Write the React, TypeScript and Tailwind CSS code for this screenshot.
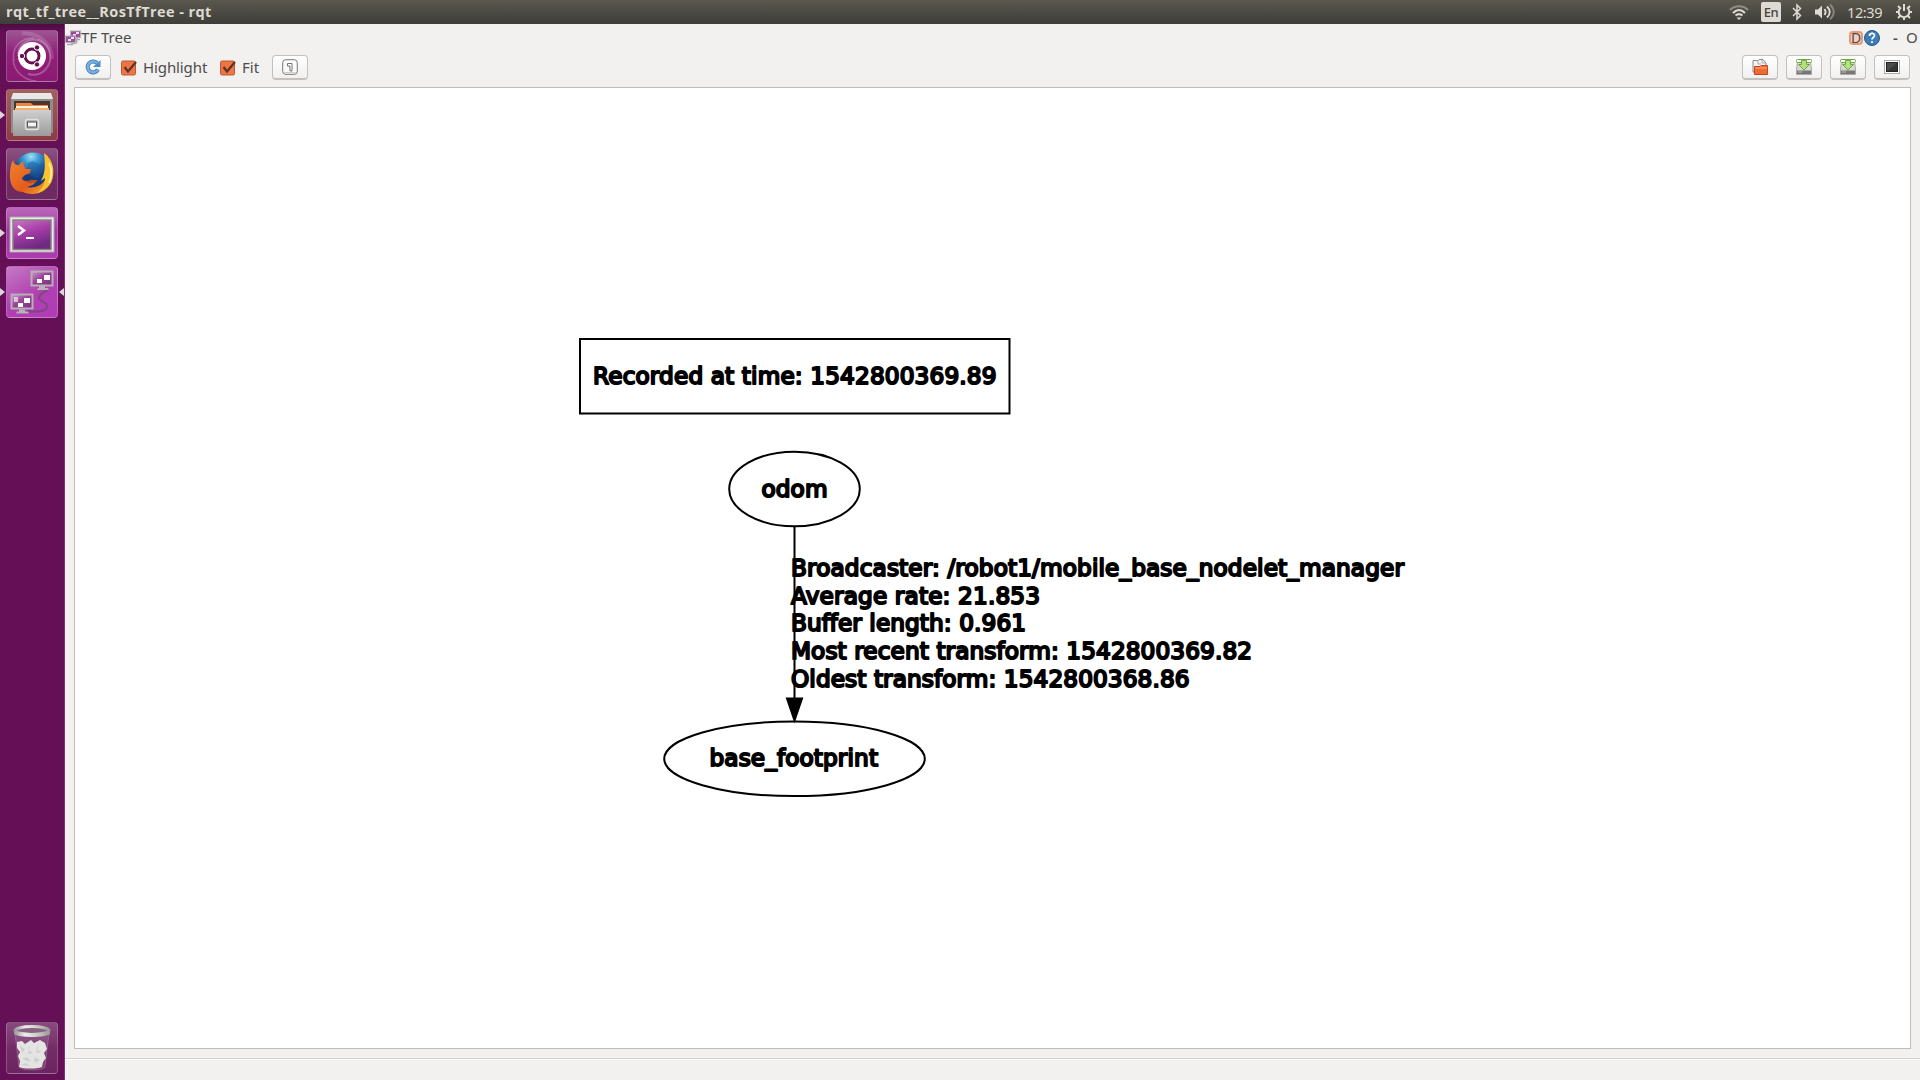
import type { ReactNode } from 'react';

const graphLines = [
  { x: 791, y: 576, w: 613, t: 'Broadcaster: /robot1/mobile_base_nodelet_manager' },
  { x: 791, y: 603.8, w: 249, t: 'Average rate: 21.853' },
  { x: 791, y: 631.4, w: 235, t: 'Buffer length: 0.961' },
  { x: 791, y: 659, w: 461, t: 'Most recent transform: 1542800369.82' },
  { x: 791, y: 686.5, w: 398.5, t: 'Oldest transform: 1542800368.86' },
  { x: 593, y: 384, w: 403.5, t: 'Recorded at time: 1542800369.89' },
  { x: 761.5, y: 496.6, w: 66, t: 'odom' },
  { x: 709.5, y: 766.3, w: 168.5, t: 'base_footprint' },
];

function Graph() {
  return (
    <svg className="block h-full w-full" viewBox="75 88 1835 960" fill="none" stroke="#000" strokeWidth="2">
      <rect x="580" y="339" width="429.5" height="74.5" />
      <ellipse cx="794.5" cy="489" rx="65.3" ry="37.3" />
      <ellipse cx="794.5" cy="758.8" rx="130.3" ry="37.3" />
      <path d="M794.5 526V700" />
      <path d="M787 698.5h15l-7.500 22z" fill="#000" />
      <g fill="#000" strokeWidth="2" strokeLinejoin="round" fontFamily="DejaVu Sans" fontSize="23.2">
        {graphLines.map((l) => (
          <text key={l.t} x={l.x} y={l.y} textLength={l.w}>{l.t}</text>
        ))}
      </g>
    </svg>
  );
}

function Arrow({ flip = false }: { flip?: boolean }) {
  return (
    <svg className={flip ? 'absolute right-px top-5 h-3 w-[5px]' : 'absolute left-0 top-5 h-3 w-[5px]'} viewBox="0 0 5 12">
      <path d={flip ? 'M5 2v8L0 6z' : 'M0 2v8l5-4z'} fill="#dcd5dc" />
    </svg>
  );
}

function Tile({ children, className, left, right }: { children: ReactNode; className: string; left?: boolean; right?: boolean }) {
  return (
    <div className="relative flex h-[52px] w-[65px] shrink-0 pl-1.5">
      <div className={'h-[52px] w-[52px] overflow-hidden rounded-[4px] border border-white/20 ' + className}>
        <svg className="-m-px block h-[52px] w-[52px]" viewBox="0 0 52 52">{children}</svg>
      </div>
      {left && <Arrow />}
      {right && <Arrow flip />}
    </div>
  );
}

function Launcher() {
  return (
    <aside className="flex w-[65px] shrink-0 flex-col gap-[7px] border-r border-[#7d3470] bg-[linear-gradient(#4d0b42_0,#650f56_8px,#650f56)] pb-1.5 pt-1.5">
      <Tile className="bg-[linear-gradient(#9d5593,#902079_45%,#8b1a73)]">
        <g fill="none" stroke="#fff">
          <path d="M12 26C12 6 40 3 44 24c2 12-8 24-22 20" strokeOpacity=".25" strokeWidth="2" />
          <path d="M7 29C8 42 18 50 30 51M8 31C5 17 15 8 28 8" strokeOpacity=".25" strokeWidth="1.500" />
          <path d="M16 3C31 3 46 12 46 29" strokeOpacity=".15" strokeWidth="4" />
        </g>
        <circle cx="26" cy="26" r="14" fill="#fff" />
        <circle cx="26" cy="26" r="7" fill="none" stroke="#64104f" strokeWidth="3" />
        <g stroke="#fff" strokeWidth="1" fill="#64104f">
          <circle cx="16" cy="26" r="2.700" /><circle cx="31" cy="17.500" r="2.700" /><circle cx="31" cy="34.500" r="2.700" />
        </g>
      </Tile>
      <Tile left className="bg-[linear-gradient(#a26060,#8d3a45)]">
        <defs>
          <linearGradient id="cab" x1="0" y1="0" x2="0" y2="1"><stop stopColor="#cfcfcf" /><stop offset="1" stopColor="#9b9b9b" /></linearGradient>
        </defs>
        <path d="M7 4h38l2 7v33H5V11z" fill="#8f8d8b" />
        <path d="M7 4h38l2 6H5z" fill="#e8e8e6" />
        <path d="M8 12h36v10H8z" fill="#4a3530" />
        <path d="M10 14h15l2 2h15v6H10z" fill="#e98743" />
        <path d="M10 17h32v2H10z" fill="#fff1df" /><path d="M9 19h34v3H9z" fill="#f5ad6e" />
        <path d="M7 21h38v26H7z" fill="url(#cab)" />
        <rect x="19.500" y="30.500" width="13" height="10" rx="2" fill="#aaa" stroke="#e0e0e0" strokeWidth="1.500" />
        <rect x="21.500" y="33" width="9" height="5" fill="#f5f5f5" stroke="#555" />
      </Tile>
      <Tile className="bg-[linear-gradient(#8a5280,#6e2b61_60%)]">
        <defs>
          <radialGradient id="globe" cx=".45" cy=".1"><stop stopColor="#9ee0f5" /><stop offset=".4" stopColor="#3e9bd3" /><stop offset="1" stopColor="#153b7b" /></radialGradient>
          <linearGradient id="fox" x1="0" y1="0" x2="1" y2=".8"><stop stopColor="#ed8430" /><stop offset=".6" stopColor="#e55b1d" /><stop offset="1" stopColor="#f6a82b" /></linearGradient>
        </defs>
        <circle cx="27" cy="24" r="19.500" fill="url(#globe)" />
        <path d="M22 15l5-2 6 3 5-1v9l-6 6-6-2-5-5z" fill="#1b5a9e" opacity=".5" />
        <path d="M5 17l2-5 1 3c2 2 3 2 5 2l4-4 1 5 2 3h5l-1 4-5 2-3 3c0 3 4 4 10 2h5c-2 4-6 6-10 7 8 2 16-2 19-9 2-6 2-10 0-16 6 5 9 14 5 21-5 9-17 14-28 9C5 44 2 32 5 17z" fill="url(#fox)" />
        <path d="M38 5c9 6 12 19 7 29-4 7-9 10-14 11 6-5 8-10 8-15l-4 3c5-9 4-18 3-28z" fill="#f8c32f" />
        <path d="M43 15c3 6 3 13 0 20" stroke="#fff0a2" strokeWidth="1.800" fill="none" />
        <path d="M17 30c0 3 4 4 10 2h5c-4 5-12 4-15-2z" fill="#b1421d" opacity=".7" />
      </Tile>
      <Tile left className="bg-[linear-gradient(#b969ba,#a437a7_45%,#ae3bb0)]">
        <defs><linearGradient id="term" x1="0" y1="0" x2=".4" y2="1"><stop stopColor="#c777c2" /><stop offset=".5" stopColor="#a83ca8" /><stop offset="1" stopColor="#6e2982" /></linearGradient></defs>
        <rect x="4" y="10" width="44" height="35" fill="#e9e9e7" stroke="#aaa8a6" />
        <rect x="7" y="13" width="38" height="29.500" fill="url(#term)" stroke="#85817f" strokeWidth="1.500" />
        <path d="M12 19l6 4.500-6 4.500" fill="none" stroke="#fff" strokeWidth="2.500" /><path d="M20 31h8" stroke="#fff" strokeWidth="2" />
      </Tile>
      <Tile left right className="bg-[linear-gradient(150deg,#c47ac2,#b13fb2_55%,#b13cb5)]">
        <defs><linearGradient id="scr" x1="0" y1="0" x2="1" y2="1"><stop stopColor="#d09bd0" /><stop offset=".45" stopColor="#9a4399" /><stop offset="1" stopColor="#7b337f" /></linearGradient></defs>
        <path d="M42 24c-5 3-10 5-9 9 2 3 9 3 8 8-1 5-11 5-20 4" fill="none" stroke="#7d4784" strokeWidth="2" />
        <g stroke="#b5b1b3" strokeWidth="2" fill="url(#scr)">
          <rect x="25.500" y="5.500" width="21" height="14" /><rect x="5.500" y="28.500" width="21" height="14" />
        </g>
        <path d="M33 20h6v2h3l1 2H31l1-2h1zM13 43.500h6v2h3l1 2H10l1-2h2z" fill="#b7b2b4" />
        <g fill="#fff"><path d="M38 9h6v5h-6zM31 13h5v4h-5z" /><path d="M18 32h6v5h-6zM12 37h5v4h-5z" /><path d="M8 31h4v5H8z" opacity=".6" /></g>
      </Tile>
      <div className="flex-1" />
      <Tile className="bg-[linear-gradient(#894a7f,#752c68_50%,#6b2560)]">
        <defs><linearGradient id="rim" x1="0" y1="0" x2="1" y2="0"><stop stopColor="#999" /><stop offset=".3" stopColor="#eee" /><stop offset=".7" stopColor="#c5c5c2" /><stop offset="1" stopColor="#999" /></linearGradient></defs>
        <path d="M9 11l4 34c2 4 24 4 26 0l4-34z" fill="#bda4ba" fillOpacity=".2" stroke="#b995b4" strokeOpacity=".4" />
        <path d="M11 20l5-1 3 3 6-4 3 3 6-3 5 3 2 6-3 4 2 5-3 4-1 5c-6 2-17 2-23 0l1-6-2-5 2-4-3-4z" fill="#e4e4e2" />
        <path d="M14 24l5 3-3 4zM24 23l-2 5 5 3-5 1zM33 22l-3 5 6 3-6 1zM16 37l5-2 4 5zM28 35l6 3-5 3zM15 43l5-2 4 3z" fill="#cececc" />
        <ellipse cx="26" cy="8.500" rx="17" ry="4" fill="#87647e" stroke="url(#rim)" strokeWidth="3" />
        <path d="M8 9c4 5 32 5 36 0v3c-4 4-32 4-36 0z" fill="url(#rim)" />
      </Tile>
    </aside>
  );
}

function ToolButton({ children }: { children: ReactNode }) {
  return (
    <button className="flex h-[25px] w-9 items-center justify-center rounded-[4px] border border-b-2 border-[#c3c1bf] bg-linear-to-b from-white to-[#f1f0ef]">
      <svg className="block h-4 w-4" viewBox="0 0 16 16">{children}</svg>
    </button>
  );
}

function Check({ label, className }: { label: string; className: string }) {
  return (
    <label className="flex h-[25px] items-center">
      <svg className="h-4 w-4" viewBox="0 0 16 16">
        <rect x=".5" y="1" width="14" height="14" rx="1.500" fill="#ef7442" stroke="#ba5934" />
        <path d="M3.500 7l3.500 4.500L15 2" fill="none" stroke="#5b3329" strokeWidth="2.200" />
      </svg>
      <span className={'ml-1.5 whitespace-nowrap text-[15px] leading-[25px] text-[#4c4c4c] ' + className}>{label}</span>
    </label>
  );
}

function SaveIcon() {
  return (
    <>
      <path d="M1.500 3h13l1 7v5.500H.5V10z" fill="#d8d8d6" stroke="#8c8c89" strokeWidth=".7" />
      <path d="M1 11.500h14v3.500H1z" fill="#777876" /><path d="M2 13h4" stroke="#bbb" />
      <rect x=".5" y=".5" width="15" height="3" rx="1" fill="#f8fff3" stroke="#6fa63c" />
      <path d="M5.500 1.500h5v4h3L8 11 2.500 5.500h3z" fill="#b0e37a" stroke="#62952f" strokeWidth=".8" />
    </>
  );
}

function MenuBar() {
  return (
    <header className="flex h-6 shrink-0 items-center justify-between bg-linear-to-b from-[#5b584f] to-[#3e3d39] pl-1.5 pr-[7px] text-[#dfdbd2]">
      <h1 className="whitespace-nowrap font-['Open_Sans'] text-[14.500px] font-bold leading-6 tracking-[0.42px]">rqt_tf_tree__RosTfTree - rqt</h1>
      <div className="flex h-6 items-center">
        <svg className="mr-[11px] h-5 w-[22px]" viewBox="0 0 22 20" fill="none" stroke="#dfdbd2" strokeWidth="2">
          <path d="M2 8c5-5 13-5 18 0" strokeOpacity=".45" /><path d="M5 11c4-4 8-4 12 0M7.500 13.500c2.500-2 4.500-2 7 0" /><path d="M11 18l-2.500-2.500h5z" fill="#dfdbd2" stroke="none" />
        </svg>
        <span className="mr-[11px] flex h-5 w-5 items-center justify-center rounded-[2px] bg-[#dfdbd2] font-['Noto_Sans'] text-[13px] font-medium leading-5 tracking-[-0.5px] text-[#45443f]">En</span>
        <svg className="mr-[12px] h-[18px] w-[10px]" viewBox="0 0 10 18" fill="none" stroke="#dfdbd2" strokeWidth="1.500"><path d="M1 5l7.500 7.500L5 16V2l3.500 3.500L1 13" /></svg>
        <svg className="mr-[11px] h-[18px] w-[22px]" viewBox="0 0 22 18" fill="none" stroke="#dfdbd2" strokeWidth="1.800">
          <path d="M1 6.500h3l4-4v13l-4-4H1z" fill="#dfdbd2" stroke="none" /><path d="M10.500 6c1.500 2 1.500 4 0 6M13 3.500c3.500 3.500 3.500 7.500 0 11" /><path d="M16 1.500c5 5 5 10 0 15" strokeOpacity=".4" />
        </svg>
        <span className="mr-3 w-[36px] whitespace-nowrap font-['Noto_Sans'] text-[14.500px] leading-[22px] tracking-[-0.4px]">12:39</span>
        <svg className="h-[18px] w-[18px]" viewBox="0 0 18 18" fill="none" stroke="#dfdbd2" strokeWidth="2">
          <path d="M6 4.500a5.300 5.300 0 1 0 6 0M9 1v7M3 3l2 2M15 3l-2 2M1 9h3M14 9h3M3 15l2-2M15 15l-2-2M9 14v3" />
        </svg>
      </div>
    </header>
  );
}

export default function App() {
  return (
    <div className="flex h-[1080px] w-[1920px] flex-col overflow-hidden bg-[#f2f1f0] font-['Noto_Sans',sans-serif]">
      <MenuBar />
      <div className="flex min-h-0 flex-1">
        <Launcher />
        <main className="flex min-w-0 flex-1 flex-col">
          <div className="flex h-[26px] shrink-0 items-center pb-px pr-0.5 pt-0.5 text-[15px] leading-[23px] text-[#4c4c4c]">
            <svg className="h-4 w-4" viewBox="0 0 16 16">
              <path d="M13 8c-4 3 1 3-2 5l-5 1" stroke="#aaa" strokeWidth="1.500" fill="none" />
              <rect x="5.500" y="1" width="10" height="6.500" fill="#9a4ea0" stroke="#b5b0b5" /><rect x=".5" y="6" width="10" height="6.500" fill="#9a4ea0" stroke="#b5b0b5" />
              <path d="M11 2h3v2h-3zM8 4h3v1.500H8zM6 7h3v2H6zM3 9h3v2H3z" fill="#f2e0f3" /><path d="M2 14.500h6M10 9.500h5" stroke="#aaa" strokeWidth="1.500" />
            </svg>
            <span className="whitespace-nowrap">TF Tree</span>
            <div className="flex-1" />
            <span className="flex h-[14px] w-[14px] items-center justify-center rounded-[4px] border-2 border-[#e79a7b] bg-[#f3cfc0] text-[14px] leading-3">D</span>
            <svg className="ml-px h-4 w-4" viewBox="0 0 16 16"><circle cx="8" cy="8" r="7.500" fill="#3c7db7" stroke="#245786" /><path d="M5.500 6c0-3.500 5-3.500 5-.5C10.500 7.500 8 7.500 8 9.500" fill="none" stroke="#fff" strokeWidth="1.700" /><circle cx="8" cy="12" r="1.100" fill="#fff" /></svg>
            <span className="ml-[13px] w-[13px] font-semibold">-</span><span className="w-3">O</span>
          </div>
          <div className="flex h-[37px] shrink-0 items-start pl-2.5 pr-2.5 pt-[5px]">
            <ToolButton>
              <path d="M13 10.500A5.500 5.500 0 1 1 12 4" fill="none" stroke="#397bb9" strokeWidth="4" /><path d="M13 10.500A5.500 5.500 0 1 1 12 4" fill="none" stroke="#78b1df" strokeWidth="2.400" /><path d="M15.500 1v7H8z" fill="#4b8dc8" />
            </ToolButton>
            <div className="ml-2.5"><Check label="Highlight" className="w-[77px] tracking-[-0.1px]" /></div>
            <Check label="Fit" className="w-[30px]" />
            <ToolButton>
              <rect x=".7" y=".7" width="14.600" height="14.600" rx="3" fill="#fafafa" stroke="#777" /><path d="M2.500 13.500h11" stroke="#ccc" /><path d="M5.500 4.500h4.500V12H8V7H5.500z" fill="#fff" stroke="#666" strokeWidth=".9" />
            </ToolButton>
            <div className="ml-auto flex gap-2">
              <ToolButton>
                <path d="M1 13V1.500h5l1-1h4L14 4v9z" fill="#f3f3f3" stroke="#898989" /><path d="M6 1v4h3M10 1v3h4" fill="none" stroke="#aaa" /><path d="M2.500 7.500H8l1-1h6.500v9h-13z" fill="#ed6b32" stroke="#c6431c" /><path d="M3 9h12" stroke="#ffb080" />
              </ToolButton>
              <ToolButton><SaveIcon /></ToolButton>
              <ToolButton><SaveIcon /></ToolButton>
              <ToolButton>
                <rect x=".5" y="1.500" width="15" height="13" fill="#fff" stroke="#aaa" /><rect x="2.500" y="3.500" width="11" height="9" fill="#4b4d4c" stroke="#222" /><path d="M3 12L13 4v8z" fill="#343635" />
              </ToolButton>
            </div>
          </div>
          <section className="mx-[9px] h-[962px] shrink-0 border border-[#bfbbb6] bg-white"><Graph /></section>
          <footer className="mt-[9px] flex-1 border-t border-[#d4d1ce] shadow-[inset_0_1px_#fff]" />
        </main>
      </div>
    </div>
  );
}
